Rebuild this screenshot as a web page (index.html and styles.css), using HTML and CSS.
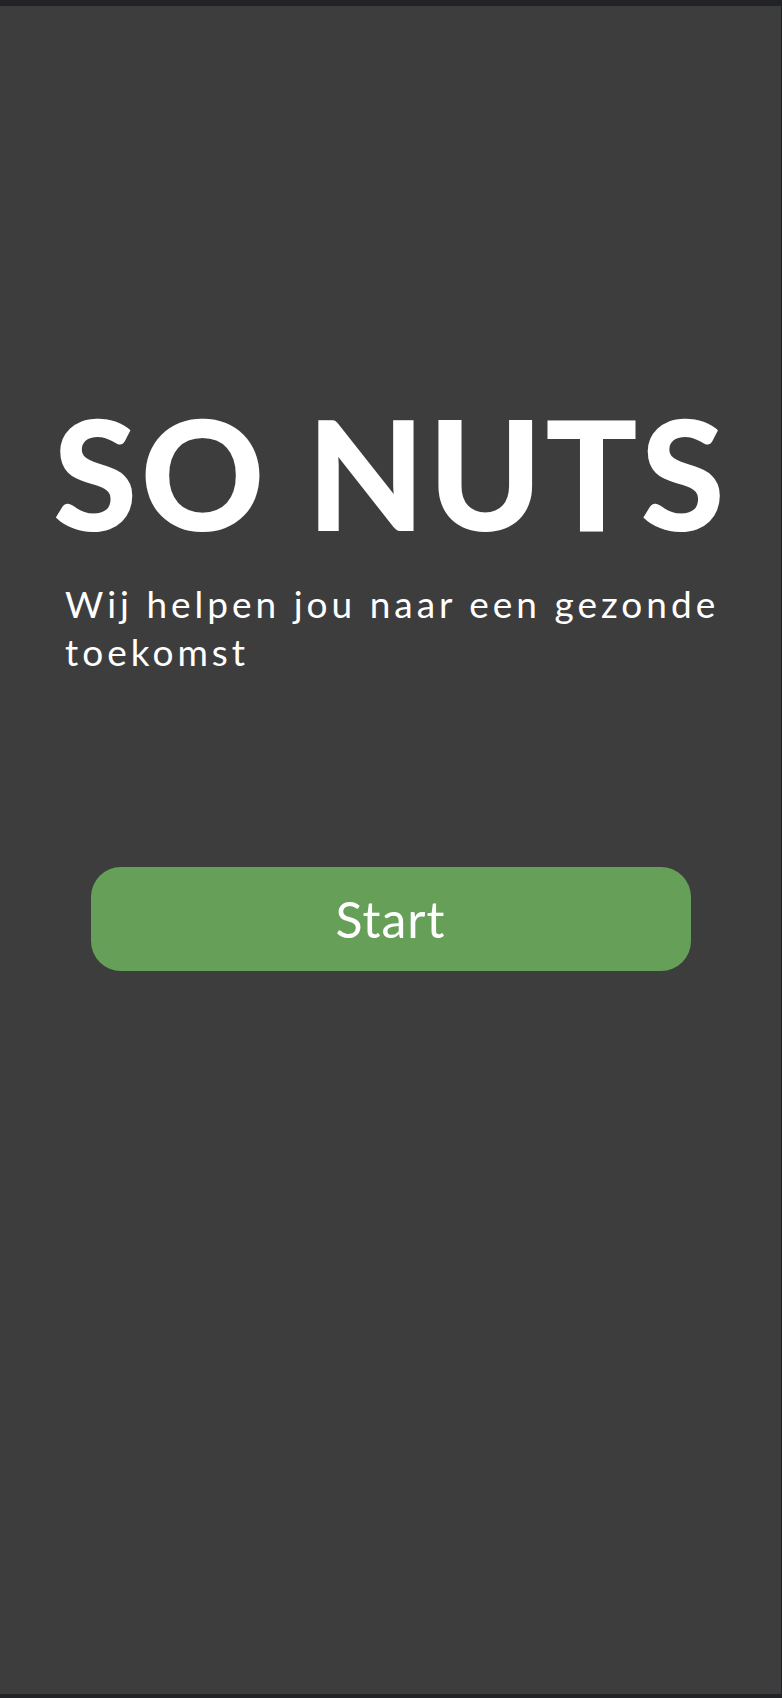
FILE: index.html
```html
<!DOCTYPE html>
<html lang="nl">
<head>
<meta charset="utf-8">
<title>SO NUTS</title>
<link rel="stylesheet" href="styles.css">
</head>
<body>
<div class="frame">
  <main class="screen">
    <h1 class="title">SO NUTS</h1>
    <p class="subtitle">Wij helpen jou naar een gezonde toekomst</p>
    <button class="start-btn" type="button">Start</button>
  </main>
</div>
</body>
</html>
```

FILE: styles.css
```css
html, body {
  margin: 0;
  padding: 0;
  background: #222326;
}

.frame {
  height: 1698px;
  box-sizing: border-box;
  padding: 6px 1px 4px 0;
}

.screen {
  height: 100%;
  background: #3d3d3d;
  display: flex;
  flex-direction: column;
  padding-top: 390px;
  box-sizing: border-box;
}

.title {
  margin: 0;
  font-family: Lato, "Liberation Sans", sans-serif;
  font-weight: 900;
  font-size: 153px;
  line-height: 1;
  letter-spacing: 3px;
  color: #ffffff;
  text-align: center;
}

.subtitle {
  margin: 31px 0 0 0;
  padding: 0 30px 0 65px;
  font-family: Lato, "Liberation Sans", sans-serif;
  font-weight: 400;
  font-size: 37px;
  line-height: 48px;
  letter-spacing: 4px;
  color: #ffffff;
}

.start-btn {
  margin: 191px auto 0 auto;
  width: 600px;
  height: 104px;
  border: none;
  border-radius: 30px;
  background: #66a058;
  color: #ffffff;
  font-family: Lato, "Liberation Sans", sans-serif;
  font-weight: 400;
  font-size: 50px;
  letter-spacing: 1px;
  display: flex;
  align-items: center;
  justify-content: center;
  padding: 0;
}
```
